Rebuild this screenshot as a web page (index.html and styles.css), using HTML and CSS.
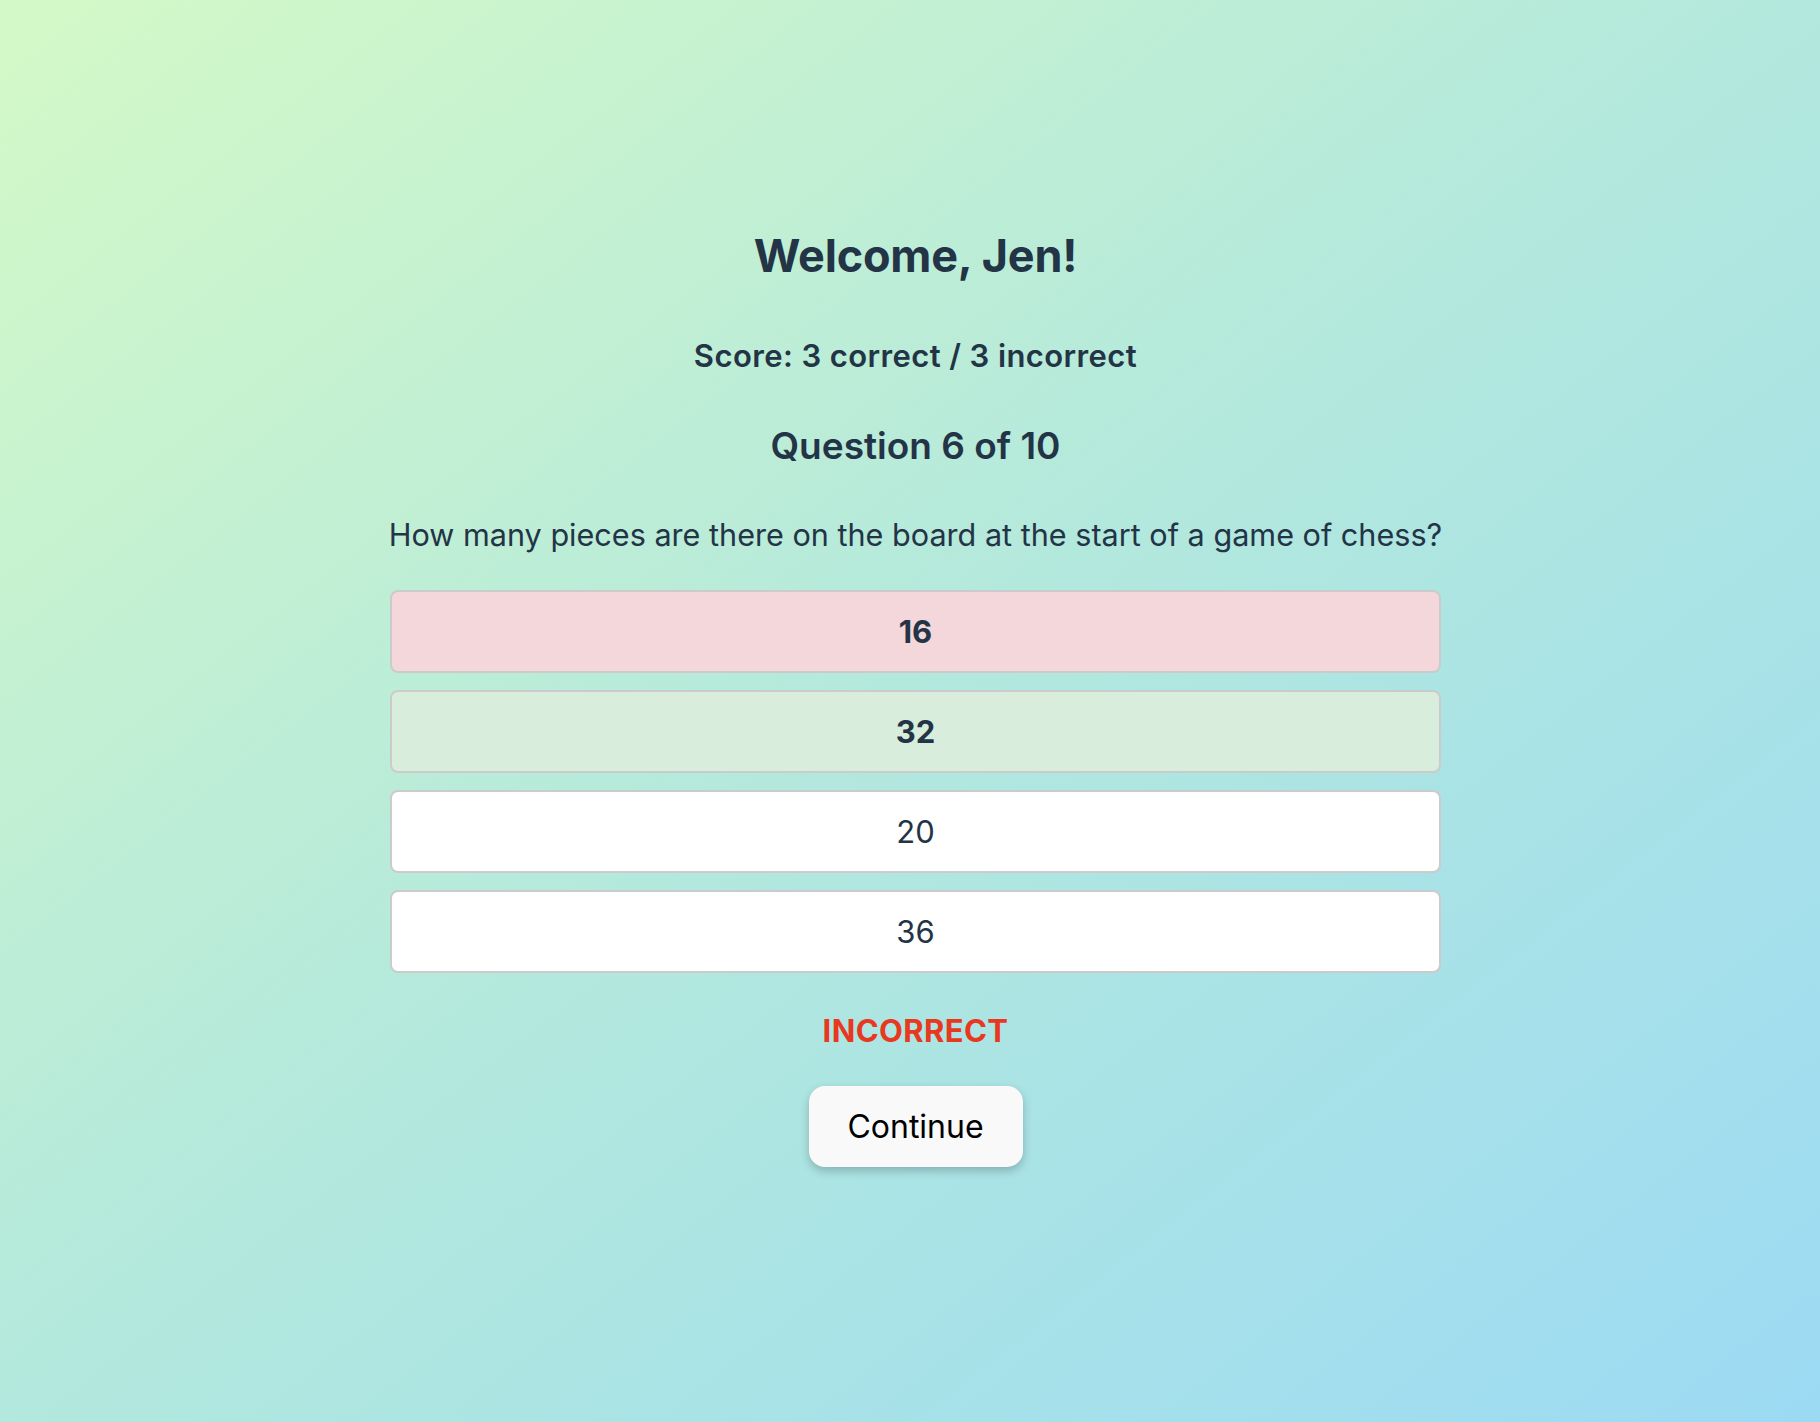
FILE: index.html
```html
<!DOCTYPE html>
<html lang="en">
<head>
<meta charset="utf-8">
<title>Quiz</title>
<link rel="stylesheet" href="styles.css">
</head>
<body>
<main class="quiz">
  <h1 class="welcome">Welcome, Jen!</h1>
  <p class="score">Score: 3 correct / 3 incorrect</p>
  <h2 class="qnum">Question 6 of 10</h2>
  <p class="qtext">How many pieces are there on the board at the start of a game of chess?</p>
  <div class="options">
    <div class="option wrong">16</div>
    <div class="option right">32</div>
    <div class="option">20</div>
    <div class="option">36</div>
  </div>
  <p class="result">INCORRECT</p>
  <button class="continue" type="button">Continue</button>
</main>
</body>
</html>
```
FILE: styles.css
```css
html, body {
  margin: 0;
  padding: 0;
}
body {
  min-height: 1422px;
  background: linear-gradient(to bottom right, #d4f9c7 0%, #b2e8dd 50%, #9cdaf4 100%);
  font-family: Inter, "Noto Sans", "Liberation Sans", sans-serif;
  color: #243447;
}
.quiz {
  width: 1051px;
  margin: 0 auto;
  padding: 229px 0 0 11px;
  display: flex;
  flex-direction: column;
  align-items: center;
  box-sizing: content-box;
}
.welcome {
  margin: 0;
  font-size: 45px;
  line-height: 54px;
  font-weight: 700;
  letter-spacing: -0.2px;
}
.score {
  margin: 54px 0 0;
  font-size: 31px;
  line-height: 38px;
  font-weight: 600;
  letter-spacing: 0.4px;
}
.qnum {
  margin: 48px 0 0;
  font-size: 37px;
  line-height: 46px;
  font-weight: 600;
}
.qtext {
  margin: 47px 0 0;
  font-size: 30.6px;
  line-height: 38px;
  font-weight: 400;
  white-space: nowrap;
}
.options {
  margin-top: 36px;
  width: 100%;
  display: flex;
  flex-direction: column;
  gap: 17px;
}
.option {
  box-sizing: border-box;
  height: 83px;
  border: 2px solid #cbcbcb;
  border-radius: 8px;
  background: #ffffff;
  display: flex;
  align-items: center;
  justify-content: center;
  font-size: 31px;
  font-weight: 400;
}
.option.wrong {
  background: #f4d7db;
  font-weight: 700;
}
.option.right {
  background: #d8eddb;
  font-weight: 700;
}
.result {
  margin: 39px 0 0;
  font-size: 31px;
  line-height: 38px;
  font-weight: 700;
  letter-spacing: 0.4px;
  color: #e8381f;
}
.continue {
  margin-top: 36px;
  width: 214px;
  height: 81px;
  border: none;
  border-radius: 16px;
  background: #f9f9f9;
  color: #000;
  font-family: Inter, "Noto Sans", "Liberation Sans", sans-serif;
  font-size: 32px;
  font-weight: 400;
  box-shadow: 0 4px 10px rgba(0, 0, 0, 0.22);
  cursor: pointer;
}
```
